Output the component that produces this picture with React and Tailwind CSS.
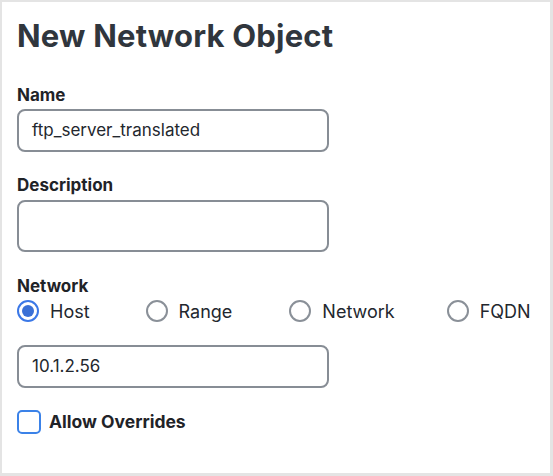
import React from "react";

function Radio({ label, checked }) {
  return (
    <label className="flex items-center gap-[11px]">
      {checked ? (
        <span className="w-[22px] h-[22px] rounded-full border-2 border-[#3b78e7] flex items-center justify-center">
          <span className="w-[12px] h-[12px] rounded-full bg-[#3a70d6]" />
        </span>
      ) : (
        <span className="w-[22px] h-[22px] rounded-full border-2 border-[#8a9098]" />
      )}
      <span className="text-[18px] text-[#23272e]">{label}</span>
    </label>
  );
}

export default function App() {
  return (
    <div className="w-[553px] h-[476px] bg-[#e4e4e4] pt-[2px] pl-[2px] pr-[3px] pb-[3px]" style={{ fontFamily: "Inter, 'Noto Sans', sans-serif" }}>
      <div className="w-full h-full bg-white pl-[15px] pt-[15px]">
        <h1 className="text-[31px] font-bold text-[#30363d] leading-[38px] tracking-[0.2px]">New Network Object</h1>
        <div className="mt-[30px] text-[17px] font-bold text-[#1f2328] leading-[20px]">Name</div>
        <div className="mt-[4px] w-[312px] h-[43px] border-2 border-[#878d95] rounded-[8px] flex items-center pl-[13px] text-[17px] text-[#23272e]">
          ftp_server_translated
        </div>
        <div className="mt-[23px] text-[17px] font-bold text-[#1f2328] leading-[20px]">Description</div>
        <div className="mt-[5px] w-[312px] h-[52px] border-2 border-[#878d95] rounded-[8px]" />
        <div className="mt-[24px] text-[17px] font-bold text-[#1f2328] leading-[20px]">Network</div>
        <div className="mt-[3px] flex items-center h-[24px]">
          <Radio label="Host" checked />
          <div className="w-[56px]" />
          <Radio label="Range" />
          <div className="w-[57px]" />
          <Radio label="Network" />
          <div className="w-[52px]" />
          <Radio label="FQDN" />
        </div>
        <div className="mt-[22px] w-[312px] h-[43px] border-2 border-[#878d95] rounded-[8px] flex items-center pl-[13px] text-[17px] text-[#23272e]">
          10.1.2.56
        </div>
        <label className="mt-[21px] flex items-center gap-[8px]">
          <span className="w-[24px] h-[24px] border-2 border-[#3b82e8] rounded-[5px]" />
          <span className="text-[17.5px] font-bold text-[#1f2328]">Allow Overrides</span>
        </label>
      </div>
    </div>
  );
}
